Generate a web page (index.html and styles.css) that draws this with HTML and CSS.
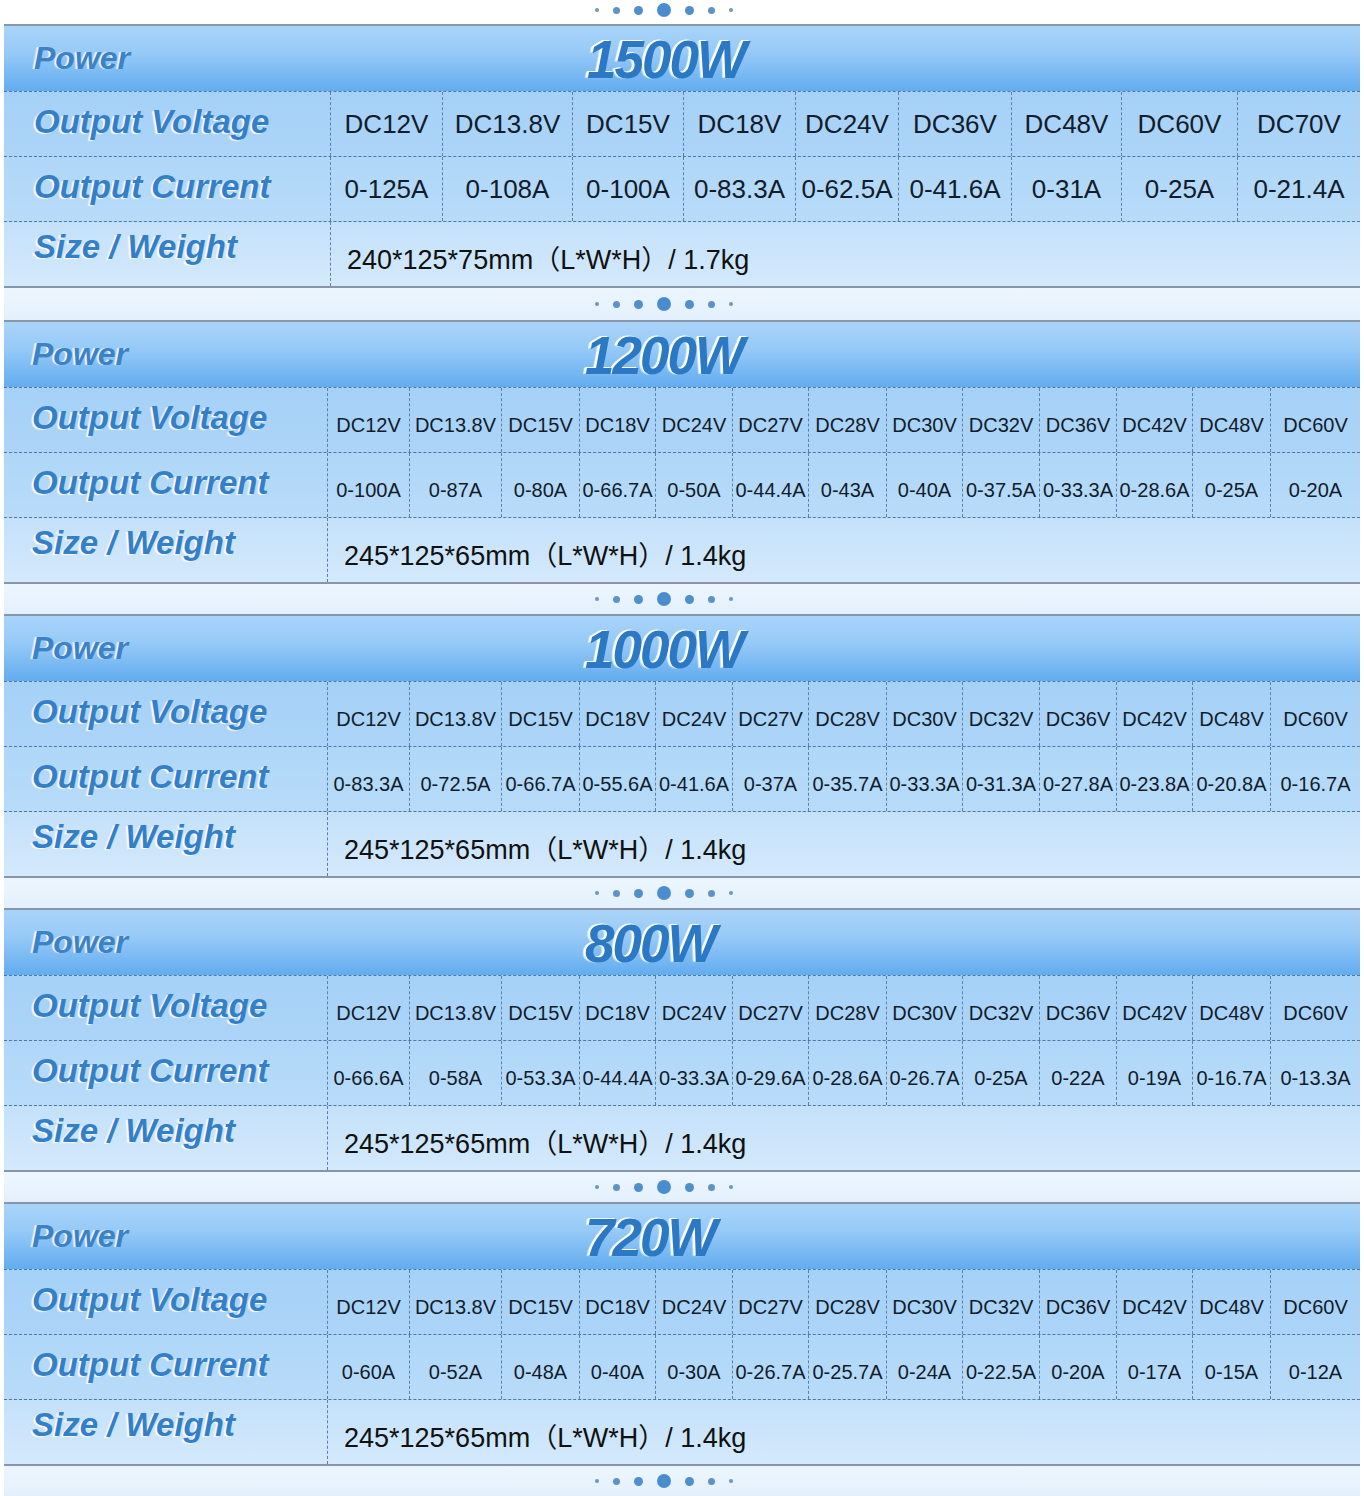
FILE: index.html
```html
<!DOCTYPE html>
<html>
<head>
<meta charset="utf-8">
<link rel="stylesheet" href="styles.css">
</head>
<body>
<div class="page">
  <div class="dots dots-top"><i class="d1"></i><i class="d2"></i><i class="d3"></i><i class="d4"></i><i class="d3"></i><i class="d2"></i><i class="d1"></i></div>

  <section class="spec s9">
    <div class="head"><div class="hl">Power</div><div class="title">1500W</div></div>
    <div class="row ov"><div class="lbl">Output Voltage</div><div class="c">DC12V</div><div class="c">DC13.8V</div><div class="c">DC15V</div><div class="c">DC18V</div><div class="c">DC24V</div><div class="c">DC36V</div><div class="c">DC48V</div><div class="c">DC60V</div><div class="c">DC70V</div></div>
    <div class="row oc"><div class="lbl">Output Current</div><div class="c">0-125A</div><div class="c">0-108A</div><div class="c">0-100A</div><div class="c">0-83.3A</div><div class="c">0-62.5A</div><div class="c">0-41.6A</div><div class="c">0-31A</div><div class="c">0-25A</div><div class="c">0-21.4A</div></div>
    <div class="row sw"><div class="lbl">Size / Weight</div><div class="c size">240*125*75mm（L*W*H）/ 1.7kg</div></div>
  </section>
  <div class="dots dots-gap first"><i class="d1"></i><i class="d2"></i><i class="d3"></i><i class="d4"></i><i class="d3"></i><i class="d2"></i><i class="d1"></i></div>

  <section class="spec s13">
    <div class="head"><div class="hl">Power</div><div class="title">1200W</div></div>
    <div class="row ov"><div class="lbl">Output Voltage</div><div class="c">DC12V</div><div class="c">DC13.8V</div><div class="c">DC15V</div><div class="c">DC18V</div><div class="c">DC24V</div><div class="c">DC27V</div><div class="c">DC28V</div><div class="c">DC30V</div><div class="c">DC32V</div><div class="c">DC36V</div><div class="c">DC42V</div><div class="c">DC48V</div><div class="c">DC60V</div></div>
    <div class="row oc"><div class="lbl">Output Current</div><div class="c">0-100A</div><div class="c">0-87A</div><div class="c">0-80A</div><div class="c">0-66.7A</div><div class="c">0-50A</div><div class="c">0-44.4A</div><div class="c">0-43A</div><div class="c">0-40A</div><div class="c">0-37.5A</div><div class="c">0-33.3A</div><div class="c">0-28.6A</div><div class="c">0-25A</div><div class="c">0-20A</div></div>
    <div class="row sw"><div class="lbl">Size / Weight</div><div class="c size">245*125*65mm（L*W*H）/ 1.4kg</div></div>
  </section>
  <div class="dots dots-gap"><i class="d1"></i><i class="d2"></i><i class="d3"></i><i class="d4"></i><i class="d3"></i><i class="d2"></i><i class="d1"></i></div>

  <section class="spec s13">
    <div class="head"><div class="hl">Power</div><div class="title">1000W</div></div>
    <div class="row ov"><div class="lbl">Output Voltage</div><div class="c">DC12V</div><div class="c">DC13.8V</div><div class="c">DC15V</div><div class="c">DC18V</div><div class="c">DC24V</div><div class="c">DC27V</div><div class="c">DC28V</div><div class="c">DC30V</div><div class="c">DC32V</div><div class="c">DC36V</div><div class="c">DC42V</div><div class="c">DC48V</div><div class="c">DC60V</div></div>
    <div class="row oc"><div class="lbl">Output Current</div><div class="c">0-83.3A</div><div class="c">0-72.5A</div><div class="c">0-66.7A</div><div class="c">0-55.6A</div><div class="c">0-41.6A</div><div class="c">0-37A</div><div class="c">0-35.7A</div><div class="c">0-33.3A</div><div class="c">0-31.3A</div><div class="c">0-27.8A</div><div class="c">0-23.8A</div><div class="c">0-20.8A</div><div class="c">0-16.7A</div></div>
    <div class="row sw"><div class="lbl">Size / Weight</div><div class="c size">245*125*65mm（L*W*H）/ 1.4kg</div></div>
  </section>
  <div class="dots dots-gap"><i class="d1"></i><i class="d2"></i><i class="d3"></i><i class="d4"></i><i class="d3"></i><i class="d2"></i><i class="d1"></i></div>

  <section class="spec s13">
    <div class="head"><div class="hl">Power</div><div class="title">800W</div></div>
    <div class="row ov"><div class="lbl">Output Voltage</div><div class="c">DC12V</div><div class="c">DC13.8V</div><div class="c">DC15V</div><div class="c">DC18V</div><div class="c">DC24V</div><div class="c">DC27V</div><div class="c">DC28V</div><div class="c">DC30V</div><div class="c">DC32V</div><div class="c">DC36V</div><div class="c">DC42V</div><div class="c">DC48V</div><div class="c">DC60V</div></div>
    <div class="row oc"><div class="lbl">Output Current</div><div class="c">0-66.6A</div><div class="c">0-58A</div><div class="c">0-53.3A</div><div class="c">0-44.4A</div><div class="c">0-33.3A</div><div class="c">0-29.6A</div><div class="c">0-28.6A</div><div class="c">0-26.7A</div><div class="c">0-25A</div><div class="c">0-22A</div><div class="c">0-19A</div><div class="c">0-16.7A</div><div class="c">0-13.3A</div></div>
    <div class="row sw"><div class="lbl">Size / Weight</div><div class="c size">245*125*65mm（L*W*H）/ 1.4kg</div></div>
  </section>
  <div class="dots dots-gap"><i class="d1"></i><i class="d2"></i><i class="d3"></i><i class="d4"></i><i class="d3"></i><i class="d2"></i><i class="d1"></i></div>

  <section class="spec s13">
    <div class="head"><div class="hl">Power</div><div class="title">720W</div></div>
    <div class="row ov"><div class="lbl">Output Voltage</div><div class="c">DC12V</div><div class="c">DC13.8V</div><div class="c">DC15V</div><div class="c">DC18V</div><div class="c">DC24V</div><div class="c">DC27V</div><div class="c">DC28V</div><div class="c">DC30V</div><div class="c">DC32V</div><div class="c">DC36V</div><div class="c">DC42V</div><div class="c">DC48V</div><div class="c">DC60V</div></div>
    <div class="row oc"><div class="lbl">Output Current</div><div class="c">0-60A</div><div class="c">0-52A</div><div class="c">0-48A</div><div class="c">0-40A</div><div class="c">0-30A</div><div class="c">0-26.7A</div><div class="c">0-25.7A</div><div class="c">0-24A</div><div class="c">0-22.5A</div><div class="c">0-20A</div><div class="c">0-17A</div><div class="c">0-15A</div><div class="c">0-12A</div></div>
    <div class="row sw"><div class="lbl">Size / Weight</div><div class="c size">245*125*65mm（L*W*H）/ 1.4kg</div></div>
  </section>
  <div class="dots dots-gap"><i class="d1"></i><i class="d2"></i><i class="d3"></i><i class="d4"></i><i class="d3"></i><i class="d2"></i><i class="d1"></i></div>
</div>
</body>
</html>
```

FILE: styles.css
```css
* { box-sizing: border-box; }
body {
  margin: 0;
  background: #ffffff;
  font-family: "Liberation Sans", Arial, "Noto Sans CJK SC", sans-serif;
}
.page {
  width: 1364px;
  padding: 0 4px;
}

/* decorative dots */
.dots {
  display: flex;
  justify-content: center;
  align-items: center;
  gap: 14px;
  padding-right: 36px;
}
.dots i {
  display: block;
  border-radius: 50%;
  background: #4f8fcb;
}
.dots .d1 { width: 4px; height: 4px; background: #6c98c4; }
.dots .d2 { width: 7px; height: 7px; background: #5f93c8; }
.dots .d3 { width: 9px; height: 9px; }
.dots .d4 { width: 14px; height: 14px; background: #4a8dcf; }
.dots-top {
  height: 24px;
  padding-bottom: 4px;
}
.dots-gap {
  height: 30px;
  background: linear-gradient(#edf6fe, #e3f0fc);
}
.dots-gap.first { height: 32px; }

/* spec block */
.spec {
  border-top: 2px solid #8796a8;
  border-bottom: 2px solid #8796a8;
}
.head {
  height: 66px;
  display: flex;
  align-items: center;
  border-bottom: 1px dashed #4f78a6;
  background: linear-gradient(#a9d4f9 0%, #97caf7 40%, #74b6f2 80%, #62acef 100%);
}
.hl {
  padding-left: 30px;
  font-style: italic;
  font-weight: bold;
  font-size: 32px;
  color: #3b83c6;
  text-shadow: -2px 0 1px rgba(255, 255, 255, 0.85);
}
.s9 .hl { width: 326px; }
.s13 .hl { width: 323px; padding-left: 28px; }
.title {
  font-style: italic;
  font-weight: bold;
  font-size: 53px;
  letter-spacing: -2px;
  color: #2b79c5;
  text-shadow: -2px -1px 0 #ffffff, -3px 0 1px rgba(255, 255, 255, 0.7);
  padding-top: 2px;
}
.s9 .title { margin-left: 257px; }
.s13 .title { margin-left: 258px; }

.row {
  display: grid;
  height: 65px;
  border-bottom: 1px dashed #4f78a6;
}
.s9 .row {
  grid-template-columns: 326px 112px 130px 111px 112px 103px 113px 110px 116px 123px;
}
.s13 .row {
  grid-template-columns: 323px 82px 92px 78px 76px 77px 76px 78px 76px 77px 77px 76px 78px 90px;
}
.s9 .sw { grid-template-columns: 326px 1fr; }
.s13 .sw { grid-template-columns: 323px 1fr; }

.ov { background: linear-gradient(#a6d1f7, #acd4f8); }
.oc { background: linear-gradient(#b0d7f8, #b8dbf9); }
.row.sw {
  height: 64px;
  border-bottom: none;
  background: linear-gradient(#c4e1fa, #d4e9fc);
}

.lbl {
  display: flex;
  align-items: center;
  padding-left: 30px;
  padding-bottom: 5px;
  font-style: italic;
  font-weight: bold;
  font-size: 33px;
  color: #3480c8;
  text-shadow: -2px 1px 1px rgba(255, 255, 255, 0.9);
  white-space: nowrap;
}
.s13 .lbl { padding-left: 28px; }
.sw .lbl { padding-bottom: 14px; }

.c {
  display: flex;
  align-items: center;
  justify-content: center;
  border-left: 1px dashed #5a80ab;
  white-space: nowrap;
  color: #121c2b;
  font-size: 26px;
}
.s13 .c {
  font-size: 20px;
  padding-top: 11px;
}
.c.size, .s13 .c.size {
  justify-content: flex-start;
  padding-left: 16px;
  padding-top: 7px;
  font-size: 27px;
  color: #111111;
}
```
